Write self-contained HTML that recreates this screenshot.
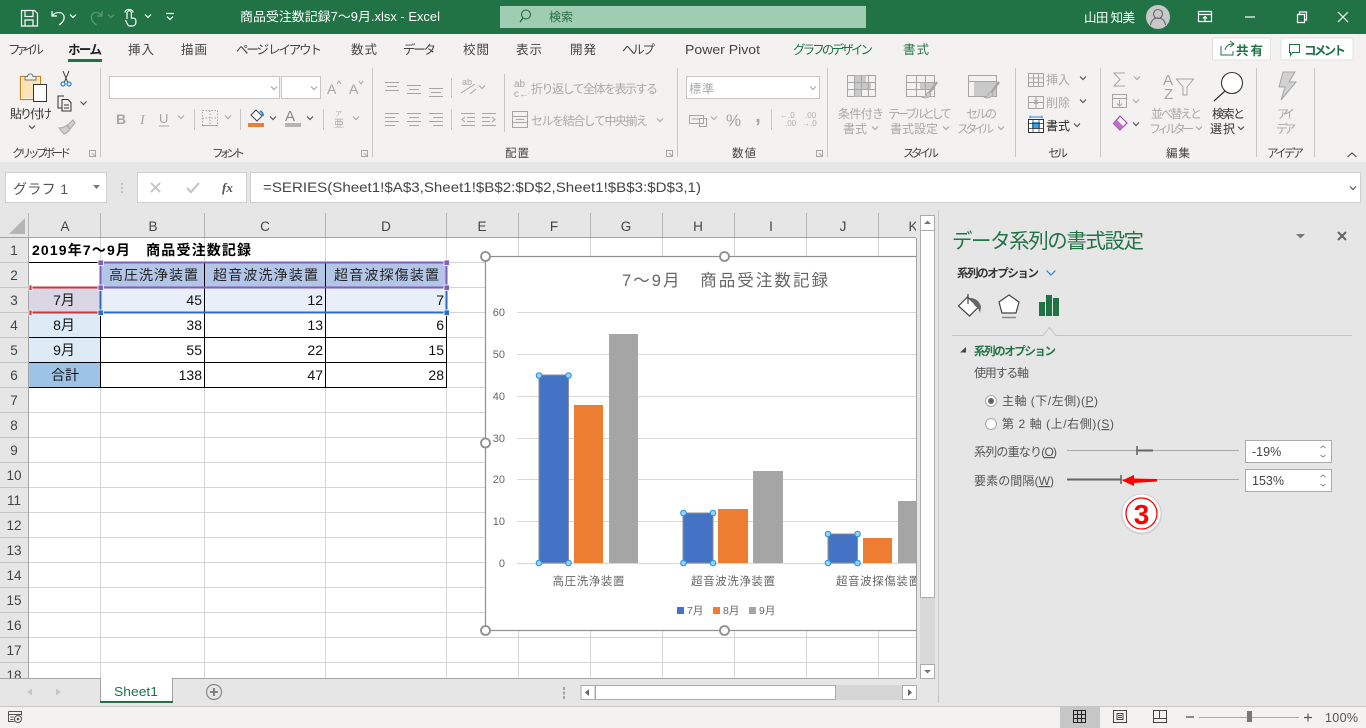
<!DOCTYPE html>
<html lang="ja"><head><meta charset="utf-8"><title>Excel</title>
<style>
html,body{margin:0;padding:0;background:#e6e6e6;overflow:hidden}
svg{display:block;position:absolute;left:0;top:0}
text{font-family:"Liberation Sans","Noto Sans CJK JP",sans-serif;font-size:12px;fill:#444;dominant-baseline:auto}
.tab{font-size:12.5px;fill:#444}
.dis{font-size:12px;fill:#a9a9a9}
.dk{font-size:12px;fill:#333}
.grp{font-size:11.5px;fill:#444}
.hd{font-size:13.5px;fill:#444;text-anchor:middle}
.cell{font-size:14px;fill:#111}
.ch{fill:none;stroke:#555;stroke-width:1.2}
.chd{fill:none;stroke:#aaa;stroke-width:1.2}
.ic{fill:none;stroke:#a6a6a6;stroke-width:1}
.wh{fill:none;stroke:#fff;stroke-width:1.2}
.pane{font-size:12px;fill:#555}
.ax{font-size:11px;fill:#666;text-anchor:end}
.cat{font-size:11.5px;fill:#666;text-anchor:middle}
</style></head><body>
<svg width="1366" height="728" viewBox="0 0 1366 728" xmlns="http://www.w3.org/2000/svg">
<defs>
<symbol id="c" overflow="visible"><polyline points="-3,-1.5 0,1.5 3,-1.5" class="ch"/></symbol>
<symbol id="d" overflow="visible"><polyline points="-3,-1.5 0,1.5 3,-1.5" class="chd"/></symbol>
</defs>
<rect width="1366" height="728" fill="#e6e6e6"/>

<!-- title bar -->
<rect width="1366" height="34" fill="#217346"/>
<rect x="500" y="6" width="366" height="22" fill="#9fcdb3"/>
<g class="wh">
<path d="M21.5 10.5h13l3 3v12.500h-16z M25 10.500v6h8v-6 M25 26v-6h8v6"/>
<path d="M52 11v5h5 M52.500 15.500c3-4 10-4 11.500 .5c.8 4-2 7-5 9"/>
</g>
<polyline points="70,14.500 73,17.500 76,14.500" class="wh" stroke-width="1"/>
<g fill="none" stroke="#5f9a7b" stroke-width="1.200"><path d="M102 11v5h-5 M101.500 15.500c-3-4-9-4-10 .5c-.8 4 2 7 5 9"/><polyline points="108,14.500 111,17.500 114,14.500"/></g>
<path class="wh" d="M127 19v-6a2.200 2.200 0 0 1 4.400 0v5c3 0 4.500 .5 4.500 2.500v2c0 2-1.500 3.500-3.500 3.500h-2c-2 0-3-1-3.500-3l-1.500-3M125 12.500c0-4 8-4 8 0"/>
<polyline points="145,14.500 148,17.500 151,14.500" class="wh"/>
<path d="M166 13.500h8" class="wh"/><polyline points="167,16.500 170,19.500 173,16.500" class="wh"/>
<text x="240" y="21" style="fill:#fff;font-size:12.500px" textLength="200" lengthAdjust="spacingAndGlyphs">商品受注数記録7～9月.xlsx  -  Excel</text>
<circle cx="526" cy="14.500" r="4.500" fill="none" stroke="#1e5f3c" stroke-width="1"/><path d="M523 18l-3 4" stroke="#1e5f3c" stroke-width="1.200"/>
<text x="549" y="21" style="fill:#2a6b49;font-size:12px" textLength="24">検索</text>
<text x="1084" y="22" style="fill:#fff;font-size:12.500px" textLength="51">山田 知美</text>
<circle cx="1158" cy="17" r="12" fill="#c8c8c8"/>
<circle cx="1158" cy="14" r="4.500" fill="none" stroke="#666" stroke-width="1.100"/><path d="M1150.500 25c.8-5 3.500-7 7.500-7s6.700 2 7.500 7" fill="none" stroke="#666" stroke-width="1.100"/>
<g class="wh" stroke-width="1"><path d="M1198.500 11.500h13v10h-13z M1198.500 14.500h13 M1205 21v-4 M1203 18.500l2-2 2 2"/><path d="M1245 17h10"/><path d="M1297.500 14.500h7v8h-7z M1299.500 14.500v-2.500h7v8h-2"/><path d="M1338 12l10 10 M1348 12l-10 10"/></g>

<!-- tabs -->
<rect y="34" width="1366" height="128" fill="#f3f2f1"/>
<text class="tab" x="8" y="54" textLength="36">ファイル</text>
<text class="tab" x="68" y="54" textLength="34" style="font-weight:700;fill:#222">ホーム</text>
<rect x="68" y="59" width="34" height="3" fill="#217346"/>
<text class="tab" x="128" y="54" textLength="26">挿入</text>
<text class="tab" x="181" y="54" textLength="26">描画</text>
<text class="tab" x="236" y="54" textLength="86">ページ レイアウト</text>
<text class="tab" x="351" y="54" textLength="26">数式</text>
<text class="tab" x="403" y="54" textLength="33">データ</text>
<text class="tab" x="463" y="54" textLength="26">校閲</text>
<text class="tab" x="516" y="54" textLength="26">表示</text>
<text class="tab" x="570" y="54" textLength="26">開発</text>
<text class="tab" x="622" y="54" textLength="33">ヘルプ</text>
<text class="tab" x="685" y="54" textLength="75" lengthAdjust="spacingAndGlyphs">Power Pivot</text>
<text class="tab" x="793" y="54" textLength="80" style="fill:#217346">グラフのデザイン</text>
<text class="tab" x="903" y="54" textLength="26" style="fill:#217346">書式</text>
<rect x="1212.500" y="38" width="58" height="22" rx="1" fill="#fff" stroke="#e3e1df"/>
<path d="M1221 46v9h12v-4 M1225 50c1-4 4-6 8-6 M1230 41l4 3-4 3" fill="none" stroke="#217346" stroke-width="1"/>
<text x="1236" y="55" style="font-size:12.500px;font-weight:700;fill:#217346" textLength="27">共有</text>
<rect x="1281" y="38" width="72" height="22" rx="1" fill="#fff" stroke="#e3e1df"/>
<path d="M1289.500 44.500h10v8h-7l-2 3v-3h-1z" fill="none" stroke="#217346" stroke-width="1"/>
<text x="1304" y="55" style="font-size:12.500px;font-weight:700;fill:#217346" textLength="42">コメント</text>

<!-- group separators -->
<g stroke="#c8c6c4"><path d="M100.500 68v89M372.500 68v89M677.500 68v89M827.500 68v89M1015.500 68v89M1100.500 68v89M1256.500 68v89M1314.500 68v89"/><path d="M194.500 109v21M240.500 109v21M323.500 109v21M451.500 78v20M451.500 109v21M504.500 74v58M771.500 109v21"/></g>

<!-- clipboard -->
<rect x="20.500" y="76.500" width="20" height="23" fill="#fff" stroke="#d47c1c" stroke-width="1.200"/>
<rect x="22" y="78" width="17" height="20" fill="#fbe3b8"/>
<path d="M25 80v-3.500h2.500c.5-3.500 5-3.500 5.500 0h3v3.500z" fill="#f3f2f1" stroke="#777"/>
<rect x="33.500" y="84.500" width="13" height="17" fill="#fff" stroke="#333"/>
<text x="10" y="118" class="dk" textLength="42">貼り付け</text>
<use href="#c" x="32" y="127"/>
<path d="M63 71l5 12M69 71l-5 12" stroke="#444" fill="none"/><circle cx="63" cy="84" r="2" fill="none" stroke="#2e86d0" stroke-width="1.300"/><circle cx="69" cy="84" r="2" fill="none" stroke="#2e86d0" stroke-width="1.300"/>
<path d="M62 108h-4v-12h6M62 99.500h6l3 3v8.500h-9z M64 105h5M64 108h5" fill="none" stroke="#333"/>
<use href="#c" x="83.500" y="103"/>
<path d="M73 120l-6 6 3 3 5-6z M67 125c-2 2-5 3-8 3l5 6c3-1 5-3 6-5z" fill="#d0d0d0" stroke="#a6a6a6"/>
<text x="12" y="157" class="grp" textLength="59">クリップボード</text>
<path d="M89.500 150.500h6v6h-6z M92 153l3 3" class="ic"/>

<!-- font -->
<rect x="109.500" y="76.500" width="170" height="22" fill="#fff" stroke="#c6c6c6"/>
<rect x="281.500" y="76.500" width="39" height="22" fill="#fff" stroke="#c6c6c6"/>
<use href="#d" x="274" y="88"/><use href="#d" x="314" y="88"/>
<text x="327" y="94" style="font-size:14px;fill:#a6a6a6">A</text><path d="M337 84l2-3 2 3" class="ic"/>
<text x="349" y="94" style="font-size:14px;fill:#a6a6a6">A</text><path d="M359 81l2 3 2-3" class="ic"/>
<text x="116" y="124" style="font-size:14px;font-weight:700;fill:#a6a6a6">B</text>
<text x="140" y="124" style="font-size:14px;font-style:italic;fill:#a6a6a6;font-family:'Liberation Serif',serif">I</text>
<text x="159" y="123" style="font-size:13px;fill:#a6a6a6">U</text><path d="M159 126h10" stroke="#a6a6a6"/>
<use href="#d" x="181" y="117"/>
<path d="M202.500 110.500h15v15h-15zM210 110.500v15M202.500 118h15" class="ic" stroke-dasharray="1.500 1.500"/><path d="M202 125.500h16" stroke="#a6a6a6"/>
<use href="#d" x="228" y="117"/>
<path d="M256 110l6 6-5 5-6-6z" fill="#fff" stroke="#444"/><path d="M260 111c2 1 3 3 3 5" stroke="#2e86d0" stroke-width="2" fill="none"/>
<rect x="248" y="123" width="16" height="4" fill="#ed7d31"/>
<use href="#c" x="273" y="118"/>
<text x="285" y="121" style="font-size:15px;fill:#888" textLength="16">A</text>
<rect x="285" y="123" width="16" height="4" fill="#b5b5b5"/>
<use href="#c" x="310" y="118"/>
<text x="335" y="116" style="font-size:7px;fill:#b0b0b0">ア</text><text x="334" y="127" style="font-size:10px;fill:#b0b0b0">亜</text>
<use href="#d" x="356" y="118"/>
<text x="212" y="157" class="grp" textLength="33">フォント</text>
<path d="M361.500 150.500h6v6h-6zM364 153l3 3" class="ic"/>

<!-- alignment -->
<g class="ic">
<path d="M385 82.500h14M387 86.500h10M385 90.500h14"/><path d="M407 85.500h14M409 89.500h10M407 93.500h14"/><path d="M429 88.500h14M431 92.500h10M429 96.500h14"/>
<path d="M385 113.500h14M385 117.500h10M385 121.500h14M385 125.500h10"/><path d="M407 113.500h14M409 117.500h10M407 121.500h14M409 125.500h10"/><path d="M429 113.500h14M433 117.500h10M429 121.500h14M433 125.500h10"/>
<path d="M461 93l14-9M470 94l6-5"/><path d="M461 113.500h14M467 117.500h8M467 121.500h8M461 125.500h14M465 117l-3 2.500 3 2.500"/><path d="M482 113.500h14M482 117.500h8M482 121.500h8M482 125.500h14M492 117l3 2.500-3 2.500"/>
<path d="M512.500 111.500h15v16h-15zM512.500 116.500h15M512.500 122.500h15M516 119.500h8"/>
</g>
<text x="462" y="85" style="font-size:9px;fill:#a6a6a6">ab</text>
<use href="#d" x="482" y="87"/>
<text x="514" y="87" style="font-size:10px;fill:#a6a6a6">ab</text><text x="514" y="97" style="font-size:10px;fill:#a6a6a6">c←</text>
<text class="dis" x="531" y="93" textLength="127">折り返して全体を表示する</text>
<text class="dis" x="531" y="125" textLength="117">セルを結合して中央揃え</text>
<use href="#d" x="660" y="120"/>
<text x="505" y="157" class="grp" textLength="24">配置</text>
<path d="M666.500 150.500h6v6h-6zM669 153l3 3" class="ic"/>

<!-- number -->
<rect x="686.500" y="76.500" width="133" height="22" fill="#fff" stroke="#c6c6c6"/>
<text class="dis" x="689" y="93" textLength="25" style="font-size:12px">標準</text>
<use href="#d" x="813" y="88"/>
<path d="M689.500 115.500h14v8h-14z M699.500 118.500h7v8h-7z M692 119h8" class="ic"/>
<use href="#d" x="714" y="118"/>
<text x="726" y="126" style="font-size:17px;fill:#a6a6a6" textLength="16">%</text>
<text x="755" y="122" style="font-size:21px;font-weight:700;fill:#a6a6a6">,</text>
<text x="780" y="118" style="font-size:8px;fill:#b0b0b0">←.0</text><text x="785" y="126" style="font-size:8px;fill:#b0b0b0">.00</text>
<text x="805" y="118" style="font-size:8px;fill:#b0b0b0">.00</text><text x="802" y="126" style="font-size:8px;fill:#b0b0b0">→.0</text>
<text x="732" y="157" class="grp" textLength="24">数値</text>
<path d="M816.500 150.500h6v6h-6zM819 153l3 3" class="ic"/>

<!-- styles -->
<rect x="847.500" y="75.500" width="28" height="21" fill="#f3f2f1" stroke="#a6a6a6"/>
<path d="M854 75.500h12v7h5v7h-10v7h-7z" fill="#c9c9c9"/>
<path d="M847.500 82.500h28M847.500 89.500h28M854.500 75.500v21M861.500 75.500v21M868.500 75.500v21" class="ic"/>
<rect x="906.500" y="75.500" width="28" height="21" fill="#f3f2f1" stroke="#a6a6a6"/>
<rect x="920" y="82" width="14" height="7" fill="#c9c9c9"/>
<path d="M906.500 82.500h28M906.500 89.500h28M916.500 75.500v21M925.500 75.500v21" class="ic"/>
<path d="M937 82l-8 11" stroke="#a6a6a6" stroke-width="2.500"/><path d="M929 92c-2 0-3 2-3 4l-4 1c3 2 8 1 9-3z" fill="#c9c9c9" stroke="#a6a6a6" stroke-width=".8"/>
<rect x="968.500" y="75.500" width="28" height="21" fill="#f3f2f1" stroke="#a6a6a6"/>
<rect x="974" y="81" width="22" height="15" fill="#c9c9c9"/>
<path d="M968.500 81.500h28" class="ic"/>
<path d="M999 82l-8 11" stroke="#a6a6a6" stroke-width="2.500"/><path d="M991 92c-2 0-3 2-3 4l-4 1c3 2 8 1 9-3z" fill="#c9c9c9" stroke="#a6a6a6" stroke-width=".8"/>
<text class="dis" x="838" y="118" textLength="46">条件付き</text>
<text class="dis" x="843" y="133" textLength="24">書式</text><use href="#d" x="875" y="128"/>
<text class="dis" x="888" y="118" textLength="64">テーブルとして</text>
<text class="dis" x="890" y="133" textLength="48">書式設定</text><use href="#d" x="946" y="128"/>
<text class="dis" x="966" y="118" textLength="31">セルの</text>
<text class="dis" x="957" y="133" textLength="37">スタイル</text><use href="#d" x="1001" y="128"/>
<text x="903" y="157" class="grp" textLength="36">スタイル</text>

<!-- cells -->
<path d="M1028.500 73.500h15v13h-15zM1033.500 73.500v13M1038.500 73.500v13M1028.500 78h15M1028.500 82.500h15" class="ic"/>
<text class="dis" x="1046" y="84" textLength="24">挿入</text><use href="#c" x="1083" y="78"/>
<path d="M1028.500 96.500h15v12h-15zM1028.500 102.500h15M1036 96.500v12" class="ic"/><path d="M1034 100l4 4M1038 100l-4 4" stroke="#a6a6a6"/>
<text class="dis" x="1046" y="107" textLength="24">削除</text><use href="#c" x="1083" y="101"/>
<rect x="1028.500" y="119.500" width="15" height="13" fill="#fff" stroke="#333"/>
<rect x="1032" y="122" width="8" height="7" fill="#41a0e0"/>
<path d="M1033 119.500v13M1039 119.500v13M1028.500 123.500h15M1028.500 128.500h15" stroke="#333" fill="none" stroke-width=".7"/>
<path d="M1030 117h12M1030 115.500v3M1042 115.500v3" stroke="#2e86d0" fill="none"/>
<text class="dk" x="1046" y="130" textLength="24" style="fill:#222">書式</text><use href="#c" x="1077" y="125"/>
<text x="1048" y="157" class="grp" textLength="20">セル</text>

<!-- editing -->
<path d="M1125 73h-11l6 6.500-6 6.500h11" class="ic" stroke-width="1.200"/><use href="#d" x="1137" y="78"/>
<path d="M1112.500 94.500h14v13h-14zM1112.500 98.500h14M1119.500 100v6M1117 103.500l2.500 2.500 2.500-2.500" class="ic"/><use href="#d" x="1136" y="101"/>
<path d="M1120 116l7 7-7 7-6.500-6.500z" fill="#fff" stroke="#a347ad" stroke-width="1.200"/><path d="M1113.500 123.500l3.500-3.500 7 7-4 3z" fill="#c26bc9"/>
<use href="#c" x="1136" y="124"/>
<text x="1163" y="85" style="font-size:15px;fill:#a6a6a6">A</text><text x="1164" y="99" style="font-size:15px;fill:#a6a6a6">Z</text>
<path d="M1176.500 79h17l-6.500 8v8h-4v-8z" class="ic" stroke-width="1.200"/>
<text class="dis" x="1151" y="118" textLength="51">並べ替えと</text>
<text class="dis" x="1149" y="133" textLength="45">フィルター</text><use href="#d" x="1199" y="128"/>
<circle cx="1232" cy="83" r="10.500" fill="#fff" stroke="#333" stroke-width="1.100"/><path d="M1225 91l-11 10" stroke="#333" stroke-width="1.200"/>
<text class="dk" x="1212" y="118" textLength="33">検索と</text>
<text class="dk" x="1210" y="133" textLength="25">選択</text><use href="#c" x="1241" y="128"/>
<text x="1166" y="157" class="grp" textLength="24">編集</text>

<!-- ideas -->
<path d="M1283 72h12l-6 10h7l-15 18 4-13h-6z" fill="#d2d2d2" stroke="#a6a6a6"/>
<text class="dis" x="1277" y="118" textLength="18">アイ</text>
<text class="dis" x="1276" y="133" textLength="20">デア</text>
<text x="1267" y="157" class="grp" textLength="37">アイデア</text>
<polyline points="1347.500,157 1352,153 1356.500,157" fill="none" stroke="#444" stroke-width="1.100"/>

<!-- formula bar -->
<rect y="162" width="1366" height="518" fill="#e6e6e6"/>
<rect x="5.500" y="172.500" width="101" height="30" fill="#fff" stroke="#cfcfcf"/>
<text x="13" y="194" style="font-size:14px;fill:#555" textLength="55">グラフ 1</text>
<path d="M93 185h7l-3.500 4z" fill="#777"/>
<path d="M122 183v2M122 187v2M122 191v2" stroke="#999"/>
<rect x="137.500" y="172.500" width="109" height="30" fill="#fff" stroke="#cfcfcf"/>
<path d="M151 183l9 9M160 183l-9 9" stroke="#c2c2c2" stroke-width="1.800"/>
<path d="M187 188l4 4 8-9" fill="none" stroke="#c2c2c2" stroke-width="2"/>
<text x="222" y="192" style="font-family:'Liberation Serif',serif;font-style:italic;font-weight:700;font-size:13px;fill:#555">fx</text>
<rect x="250.500" y="172.500" width="1110" height="30" fill="#fff" stroke="#cfcfcf"/>
<text x="263" y="192" style="font-size:14px;fill:#444" textLength="438" lengthAdjust="spacingAndGlyphs">=SERIES(Sheet1!$A$3,Sheet1!$B$2:$D$2,Sheet1!$B$3:$D$3,1)</text>
<use href="#c" x="1353" y="188"/>

<!-- sheet -->
<rect x="29" y="238" width="887" height="440" fill="#fff"/>
<g stroke="#d4d4d4">
<path d="M29 262.500h887M29 287.500h887M29 312.500h887M29 337.500h887M29 362.500h887M29 387.500h887M29 412.500h887M29 437.500h887M29 462.500h887M29 487.500h887M29 512.500h887M29 537.500h887M29 562.500h887M29 587.500h887M29 612.500h887M29 637.500h887M29 662.500h887"/>
<path d="M100.500 238v440M204.500 238v440M325.500 238v440M446.500 238v440M518.500 238v440M590.500 238v440M662.500 238v440M734.500 238v440M806.500 238v440M878.500 238v440"/>
</g>
<!-- column header -->
<rect x="0" y="213" width="916" height="25" fill="#e6e6e6"/>
<path d="M25 218v16h-16z" fill="#b5b5b5"/>
<g stroke="#b3b3b3"><path d="M28.500 213v25M100.500 213v25M204.500 213v25M325.500 213v25M446.500 213v25M518.500 213v25M590.500 213v25M662.500 213v25M734.500 213v25M806.500 213v25M878.500 213v25"/></g>
<path d="M0 237.500h916" stroke="#a3a3a3"/>
<text class="hd" x="65" y="231">A</text><text class="hd" x="153" y="231">B</text><text class="hd" x="265" y="231">C</text><text class="hd" x="386" y="231">D</text><text class="hd" x="482" y="231">E</text><text class="hd" x="554" y="231">F</text><text class="hd" x="626" y="231">G</text><text class="hd" x="698" y="231">H</text><text class="hd" x="771" y="231">I</text><text class="hd" x="843" y="231">J</text><text class="hd" x="913" y="231">K</text>
<rect x="916" y="213" width="22" height="25" fill="#e6e6e6"/>
<!-- row header -->
<rect x="0" y="238" width="28.500" height="440" fill="#e6e6e6"/>
<path d="M28.500 238v440" stroke="#a3a3a3"/>
<g stroke="#c4c4c4"><path d="M0 262.500h28M0 287.500h28M0 312.500h28M0 337.500h28M0 362.500h28M0 387.500h28M0 412.500h28M0 437.500h28M0 462.500h28M0 487.500h28M0 512.500h28M0 537.500h28M0 562.500h28M0 587.500h28M0 612.500h28M0 637.500h28M0 662.500h28"/></g>
<g>
<text class="hd" x="14" y="255">1</text><text class="hd" x="14" y="280">2</text><text class="hd" x="14" y="305">3</text><text class="hd" x="14" y="330">4</text><text class="hd" x="14" y="355">5</text><text class="hd" x="14" y="380">6</text><text class="hd" x="14" y="405">7</text><text class="hd" x="14" y="430">8</text><text class="hd" x="14" y="455">9</text><text class="hd" x="14" y="480">10</text><text class="hd" x="14" y="505">11</text><text class="hd" x="14" y="530">12</text><text class="hd" x="14" y="555">13</text><text class="hd" x="14" y="580">14</text><text class="hd" x="14" y="605">15</text><text class="hd" x="14" y="630">16</text><text class="hd" x="14" y="655">17</text><text class="hd" x="14" y="680">18</text>
</g>
<!-- cells -->
<rect x="101" y="263" width="345" height="25" fill="#b4c6e7"/>
<rect x="101" y="288" width="345" height="25" fill="#e8eff9"/>
<rect x="29" y="288" width="71" height="25" fill="#dad6e4"/>
<rect x="29" y="313" width="71" height="49" fill="#ddebf7"/>
<rect x="29" y="363" width="71" height="24" fill="#9dc3e6"/>
<path d="M29 262.500h72M29 337.500h418M29 362.500h418M29 387.500h418M100.500 263v125M204.500 263v125M325.500 263v125M446.500 263v125" stroke="#000" fill="none"/>
<text x="32" y="255" style="font-size:14px;font-weight:700;fill:#000" textLength="219">2019年7～9月　商品受注数記録</text>
<text class="cell" x="109" y="280" textLength="89" style="fill:#222">高圧洗浄装置</text>
<text class="cell" x="213" y="280" textLength="105" style="fill:#222">超音波洗浄装置</text>
<text class="cell" x="334" y="280" textLength="105" style="fill:#222">超音波探傷装置</text>
<text class="cell" x="64" y="305" text-anchor="middle">7月</text><text class="cell" x="64" y="330" text-anchor="middle">8月</text><text class="cell" x="64" y="355" text-anchor="middle">9月</text><text class="cell" x="65" y="380" text-anchor="middle">合計</text>
<text class="cell" x="202" y="305" text-anchor="end">45</text><text class="cell" x="323" y="305" text-anchor="end">12</text><text class="cell" x="444" y="305" text-anchor="end">7</text>
<text class="cell" x="202" y="330" text-anchor="end">38</text><text class="cell" x="323" y="330" text-anchor="end">13</text><text class="cell" x="444" y="330" text-anchor="end">6</text>
<text class="cell" x="202" y="355" text-anchor="end">55</text><text class="cell" x="323" y="355" text-anchor="end">22</text><text class="cell" x="444" y="355" text-anchor="end">15</text>
<text class="cell" x="202" y="380" text-anchor="end">138</text><text class="cell" x="323" y="380" text-anchor="end">47</text><text class="cell" x="444" y="380" text-anchor="end">28</text>
<!-- selection ranges -->
<path d="M29 287.500h71M29 312.500h71" stroke="#c8393f" stroke-width="2"/>
<path d="M100.500 288v25M446.500 288v25M100 312.500h347" stroke="#2f6cc4" stroke-width="2" fill="none"/>
<rect x="100.500" y="262.500" width="346" height="25" fill="none" stroke="#7f5fb8" stroke-width="2"/>
<g stroke="#fff" stroke-width=".8">
<rect x="98" y="260" width="5.500" height="5.500" fill="#7f5fb8"/><rect x="444" y="260" width="5.500" height="5.500" fill="#7f5fb8"/><rect x="98" y="285" width="5.500" height="5.500" fill="#7f5fb8"/><rect x="444" y="285" width="5.500" height="5.500" fill="#7f5fb8"/>
<rect x="98" y="310" width="5.500" height="5.500" fill="#2f6cc4"/><rect x="444" y="310" width="5.500" height="5.500" fill="#2f6cc4"/>
<rect x="29" y="285" width="3" height="5.500" fill="#c8393f"/><rect x="29" y="310" width="3" height="5.500" fill="#c8393f"/>
</g>

<!-- chart -->
<svg x="0" y="0" width="916" height="728" overflow="hidden">
<rect x="485.500" y="256.500" width="440" height="374" fill="#fff" stroke="#8f8f8f" stroke-width="1.200"/>
<g stroke="#d9d9d9" stroke-width="1"><path d="M517 312.500h399M517 354.500h399M517 396.500h399M517 438.500h399M517 479.500h399M517 521.500h399"/><path d="M517 563.500h399" stroke-width="1.200"/></g>
<text x="622" y="286" style="font-size:16.500px;fill:#666" textLength="206">7～9月　商品受注数記録</text>
<text class="ax" x="505" y="316">60</text><text class="ax" x="505" y="358">50</text><text class="ax" x="505" y="400">40</text><text class="ax" x="505" y="442">30</text><text class="ax" x="505" y="483">20</text><text class="ax" x="505" y="525">10</text><text class="ax" x="505" y="567">0</text>
<rect x="539" y="375" width="29.500" height="188" fill="#4472c4" stroke="#8e8e8e"/>
<rect x="574" y="405" width="29" height="158" fill="#ed7d31"/>
<rect x="609" y="334" width="29" height="229" fill="#a5a5a5"/>
<rect x="683" y="513" width="30" height="50" fill="#4472c4" stroke="#8e8e8e"/>
<rect x="718" y="509" width="30" height="54" fill="#ed7d31"/>
<rect x="753" y="471" width="30" height="92" fill="#a5a5a5"/>
<rect x="828" y="534" width="29.500" height="29" fill="#4472c4" stroke="#8e8e8e"/>
<rect x="863" y="538" width="29" height="25" fill="#ed7d31"/>
<rect x="898" y="501" width="30" height="62" fill="#a5a5a5"/>
<g fill="#9dd0f5" stroke="#1e90e0" stroke-width="1">
<circle cx="539" cy="375.500" r="2.800"/><circle cx="568.500" cy="375.500" r="2.800"/><circle cx="539" cy="563" r="2.800"/><circle cx="568.500" cy="563" r="2.800"/>
<circle cx="683.500" cy="513" r="2.800"/><circle cx="713" cy="513" r="2.800"/><circle cx="683.500" cy="563" r="2.800"/><circle cx="713" cy="563" r="2.800"/>
<circle cx="828" cy="534" r="2.800"/><circle cx="857.500" cy="534" r="2.800"/><circle cx="828" cy="563" r="2.800"/><circle cx="857.500" cy="563" r="2.800"/>
</g>
<text class="cat" x="588.500" y="585" textLength="72">高圧洗浄装置</text>
<text class="cat" x="733" y="585" textLength="84">超音波洗浄装置</text>
<text x="836" y="585" style="font-size:11.500px;fill:#666" textLength="84">超音波探傷装置</text>
<rect x="677" y="607" width="7" height="7" fill="#4472c4"/><text x="687" y="614" style="font-size:10.500px;fill:#666">7月</text>
<rect x="713" y="607" width="7" height="7" fill="#ed7d31"/><text x="723" y="614" style="font-size:10.500px;fill:#666">8月</text>
<rect x="749" y="607" width="7" height="7" fill="#a5a5a5"/><text x="759" y="614" style="font-size:10.500px;fill:#666">9月</text>
</svg>
<g fill="#fff" stroke="#8f8f8f" stroke-width="1.800">
<circle cx="485.500" cy="256.500" r="4.500"/><circle cx="724.500" cy="256.500" r="4.500"/><circle cx="485.500" cy="443" r="4.500"/><circle cx="485.500" cy="630.500" r="4.500"/><circle cx="724.500" cy="630.500" r="4.500"/>
</g>
<path d="M916.500 238v440" stroke="#a3a3a3"/>

<!-- vertical scrollbar -->
<rect x="917" y="213" width="21" height="467" fill="#e6e6e6"/>
<rect x="920" y="215" width="15" height="464" fill="#d8d8d8"/>
<rect x="920.500" y="215.500" width="14" height="15" fill="#fff" stroke="#ababab"/>
<path d="M924 224l3.500-3.500 3.500 3.500z" fill="#777"/>
<rect x="920.500" y="230.500" width="14" height="367" fill="#fff" stroke="#ababab"/>
<rect x="920.500" y="664.500" width="14" height="14" fill="#fff" stroke="#ababab"/>
<path d="M924 670l3.500 3.500 3.500-3.500z" fill="#777"/>
<path d="M938.500 210v493" stroke="#c6c6c6"/>

<!-- sheet tab bar -->
<rect x="0" y="678.500" width="916" height="27.500" fill="#e6e6e6"/>
<path d="M0 678.500h916" stroke="#a3a3a3"/>
<rect x="100.500" y="678.500" width="72" height="24" fill="#fff"/>
<path d="M100.500 702v-23.500M172.500 702v-23.500" stroke="#a3a3a3"/>
<rect x="100" y="701" width="73" height="2" fill="#217346"/>
<rect x="101" y="677" width="71" height="2" fill="#fff"/>
<text x="114" y="696" style="font-size:13px;fill:#217346" textLength="44" lengthAdjust="spacingAndGlyphs">Sheet1</text>
<path d="M32 688.500l-5 3.500 5 3.500z" fill="#c4c4c4"/><path d="M56 688.500l5 3.500-5 3.500z" fill="#c4c4c4"/>
<circle cx="214" cy="692" r="7.500" fill="none" stroke="#888" stroke-width="1.200"/><path d="M210 692h8M214 688v8" stroke="#777" stroke-width="1.800"/>
<path d="M564 687v3M564 691.500v3M564 696v3" stroke="#a3a3a3" stroke-width="2"/>
<rect x="581" y="685" width="335" height="15" fill="#d6d6d6"/>
<rect x="581" y="685.500" width="14" height="14" fill="#fff" stroke="#ababab"/>
<path d="M589 689l-4 3.500 4 3.500z" fill="#666"/>
<rect x="595.500" y="685.500" width="240" height="14" fill="#fff" stroke="#ababab"/>
<rect x="902.500" y="685.500" width="14" height="14" fill="#fff" stroke="#ababab"/>
<path d="M908 689l4 3.500-4 3.500z" fill="#666"/>

<!-- task pane -->
<rect x="939" y="210" width="427" height="496" fill="#e6e6e6"/>
<text x="952" y="248" style="font-size:20.500px;fill:#217346" textLength="192">データ系列の書式設定</text>
<path d="M1296 234h9l-4.500 4.500z" fill="#777"/>
<path d="M1338 232l8 8M1346 232l-8 8" stroke="#666" stroke-width="2"/>
<text x="957" y="277" style="font-size:11.500px;font-weight:700;fill:#333" textLength="82">系列のオプション</text>
<polyline points="1046.500,270.500 1051,275 1055.500,270.500" fill="none" stroke="#2e86d0" stroke-width="1.200"/>
<path d="M958.500 306l9-9 11 10-9 9z" fill="#fff" stroke="#444" stroke-width="1.200"/><path d="M968 294v10" stroke="#444" stroke-width="1.200"/><path d="M970 298c6 0 10 4 11 9l-1 6c-1-4-3-6-5-7z" fill="#666"/>
<path d="M1009 295l10 7-3 11h-14l-3-11z" fill="#fff" stroke="#444" stroke-width="1.200"/><path d="M1002 317.500h14" stroke="#888" stroke-width="1.500"/>
<rect x="1039" y="302" width="6" height="14" fill="#217346"/><rect x="1046" y="295" width="6" height="21" fill="#217346"/><rect x="1053" y="298" width="6" height="18" fill="#217346"/>
<path d="M952 335.500h91l6.500-8 6.500 8h296" fill="#e6e6e6" stroke="#c4c4c4"/>
<path d="M966 347v5.500h-6z" fill="#444"/>
<text x="974" y="355" style="font-size:11.500px;font-weight:700;fill:#217346" textLength="82">系列のオプション</text>
<text class="pane" x="974" y="377" textLength="55">使用する軸</text>
<circle cx="991" cy="401" r="5.500" fill="#fff" stroke="#a9a9a9"/><circle cx="991" cy="401" r="3" fill="#666"/>
<text class="pane" x="1002" y="405" textLength="96">主軸 (下/左側)(<tspan text-decoration="underline">P</tspan>)</text>
<circle cx="991" cy="424" r="5.500" fill="#fff" stroke="#a9a9a9"/>
<text class="pane" x="1002" y="428" textLength="112">第 2 軸 (上/右側)(<tspan text-decoration="underline">S</tspan>)</text>
<text class="pane" x="974" y="456" textLength="83">系列の重なり(<tspan text-decoration="underline">O</tspan>)</text>
<path d="M1067 450.500h172" stroke="#a9a9a9"/><path d="M1137 450.500h16" stroke="#666" stroke-width="2"/><path d="M1137 446v9" stroke="#666" stroke-width="1.600"/>
<rect x="1245.500" y="440.500" width="86" height="22" fill="#fff" stroke="#ababab"/>
<text x="1252" y="456" style="font-size:12.500px;fill:#444">-19%</text>
<path d="M1320.500 448l2.500-2 2.500 2M1320.500 455l2.500 2 2.500-2" fill="none" stroke="#888"/>
<text class="pane" x="974" y="485" textLength="80">要素の間隔(<tspan text-decoration="underline">W</tspan>)</text>
<path d="M1067 479.500h172" stroke="#a9a9a9"/><path d="M1067 479.500h54" stroke="#666" stroke-width="2"/><path d="M1121 475v9" stroke="#666" stroke-width="1.600"/>
<rect x="1245.500" y="469.500" width="86" height="22" fill="#fff" stroke="#ababab"/>
<text x="1252" y="485" style="font-size:12.500px;fill:#444">153%</text>
<path d="M1320.500 477l2.500-2 2.500 2M1320.500 484l2.500 2 2.500-2" fill="none" stroke="#888"/>
<path d="M1122 480.500l12-5.500v3.500l23 .5v2.500l-23 1.500v3z" fill="#f00"/>
<circle cx="1141.500" cy="514" r="20.500" fill="#bbb" opacity=".45"/>
<circle cx="1141.500" cy="513.500" r="19" fill="#fff"/>
<circle cx="1141.500" cy="513.500" r="15.500" fill="#fff" stroke="#f00" stroke-width="1.300"/>
<text x="1141.500" y="524" text-anchor="middle" style="font-size:28px;font-weight:700;fill:#f00">3</text>

<!-- status bar -->
<rect y="706" width="1366" height="22" fill="#f3f2f1"/>
<path d="M0 706.500h1366" stroke="#c8c6c4"/>
<path d="M8.500 711.500h13v4M8.500 711.500v10h6M8.500 714.500h13M10.500 717h3M10.500 719.500h3" fill="none" stroke="#555"/>
<circle cx="18" cy="719" r="3.500" fill="none" stroke="#555"/><circle cx="18" cy="719" r="1.300" fill="#555"/>
<rect x="1060" y="706.500" width="40" height="21.500" fill="#c6c6c6"/>
<path d="M1073.500 710.500h12v12h-12zM1077.500 710.500v12M1081.500 710.500v12M1073.500 714.500h12M1073.500 718.500h12" fill="none" stroke="#222"/>
<path d="M1113.500 710.500h13v12h-13zM1117 713.500h6v6h-6zM1118 715.500h4M1118 717.500h4" fill="none" stroke="#444"/>
<path d="M1153.500 710.500h13v12h-13zM1153.500 718.500h13M1159.500 710.500v8" fill="none" stroke="#444"/>
<path d="M1186 717h8" stroke="#555" stroke-width="1.300"/>
<path d="M1199 717.500h100" stroke="#a9a9a9"/>
<rect x="1247" y="711" width="5" height="11" fill="#777"/>
<path d="M1304 717.500h8M1308 713.500v8" stroke="#555" stroke-width="1.200"/>
<text x="1325" y="722" style="font-size:12.500px;fill:#555" textLength="33">100%</text>
</svg>
</body></html>
